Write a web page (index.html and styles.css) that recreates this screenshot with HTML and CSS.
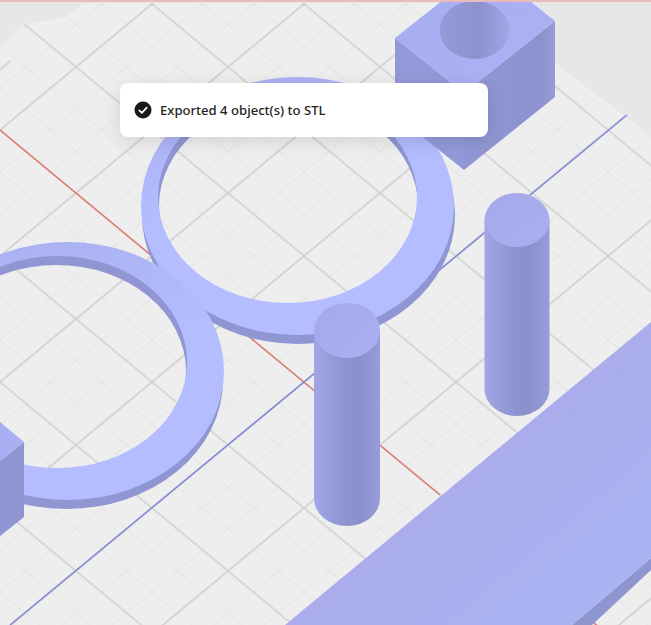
FILE: index.html
```html
<!DOCTYPE html>
<html lang="en">
<head>
<meta charset="utf-8">
<title>Export</title>
<link rel="stylesheet" href="styles.css">
</head>
<body>
<main class="viewport">
  <svg class="scene" viewBox="0 0 651 625" width="651" height="625" aria-hidden="true">
    <defs>
      <pattern id="grid" patternUnits="userSpaceOnUse" width="99" height="99" patternTransform="matrix(0.7677 -0.6364 0.7677 0.6364 304 382)">
        <path class="grid-minor" d="M33 0V99M66 0V99M0 33H99M0 66H99"/>
        <path class="grid-major" d="M0 0V99M99 0V99M0 0H99M0 99H99"/>
      </pattern>
      <linearGradient id="ringTop" x1="0" y1="0" x2="0.3" y2="1">
        <stop offset="0" stop-color="#a8aff0"/>
        <stop offset="0.55" stop-color="#b3bdff"/>
        <stop offset="1" stop-color="#b3bdff"/>
      </linearGradient>
      <linearGradient id="cylBody" x1="0" y1="0" x2="1" y2="0">
        <stop offset="0" stop-color="#a0a6e6"/>
        <stop offset="0.45" stop-color="#8e94d0"/>
        <stop offset="0.7" stop-color="#8a90ca"/>
        <stop offset="1" stop-color="#979dda"/>
      </linearGradient>
      <linearGradient id="cylTop" x1="0" y1="0" x2="1" y2="1">
        <stop offset="0" stop-color="#a6a8e8"/>
        <stop offset="1" stop-color="#a9b0f2"/>
      </linearGradient>
      <linearGradient id="boxTop" x1="0" y1="0" x2="1" y2="1">
        <stop offset="0" stop-color="#a6adef"/>
        <stop offset="1" stop-color="#aab2f6"/>
      </linearGradient>
      <linearGradient id="boxHole" x1="0" y1="0" x2="1" y2="0">
        <stop offset="0" stop-color="#969cd9"/>
        <stop offset="0.55" stop-color="#8b91cb"/>
        <stop offset="1" stop-color="#a0a7e6"/>
      </linearGradient>
      <linearGradient id="boxRight" x1="0" y1="0" x2="1" y2="0">
        <stop offset="0" stop-color="#9097d4"/>
        <stop offset="0.85" stop-color="#8b92cd"/>
        <stop offset="1" stop-color="#959cd9"/>
      </linearGradient>
      <linearGradient id="slabTop" x1="0" y1="0" x2="1" y2="1">
        <stop offset="0.3" stop-color="#aba8e8"/>
        <stop offset="1" stop-color="#a8b6f4"/>
      </linearGradient>
      <path id="ring" fill-rule="evenodd" d="M141 206a156.500 129 0 1 0 313 0a156.500 129 0 1 0-313 0ZM158 197a129.500 106 0 1 0 259 0a129.500 106 0 1 0-259 0Z"/>
    </defs>

    <rect class="backdrop" width="651" height="625"/>
    <path class="plate" d="M0 47L20 25L63 18L84 3H476L651 136V625H0Z"/>
    <path class="plate-grid" d="M0 47L20 25L63 18L84 3H476L651 136V625H0Z"/>
    <path class="stub" d="M0 70L10 61"/>
    <path class="axis-x" d="M0 130L440 495M590 620L600 628"/>
    <path class="axis-y" d="M627 115L10 625"/>

    <g class="ring-side">
      <use href="#ring" x="1" y="9"/>
      <use href="#ring" x="-231" y="174"/>
    </g>
    <g class="ring-top">
      <use href="#ring"/>
      <use href="#ring" x="-230" y="165"/>
    </g>

    <polygon class="box-left" points="395,38 464,93 464,170 395,115"/>
    <polygon class="box-right" points="464,93 555,21 555,97 464,170"/>
    <polygon class="box-top" points="395,38 486,-34 555,21 464,93"/>
    <ellipse class="box-hole" cx="474.500" cy="30" rx="35" ry="29"/>

    <polygon class="box-right-flat" points="0,461 24,442 24,517 0,536"/>
    <polygon class="box-top" points="0,422 24,442 0,461"/>

    <path class="cyl-body" d="M314 330V498.500A33 27.500 0 0 0 380 498.500V330Z"/>
    <ellipse class="cyl-top" cx="347" cy="330.500" rx="33" ry="27.500"/>
    <path class="cyl-body" d="M484.500 220V389A32.500 27 0 0 0 549.500 389V220Z"/>
    <ellipse class="cyl-top" cx="517" cy="220" rx="32.500" ry="27"/>

    <polygon class="slab-side" points="572,625 651,558 651,570 592,625"/>
    <polygon class="slab-top" points="285,625 651,322 651,558 572,625"/>

    <rect class="top-edge" width="651" height="2"/>
  </svg>

  <div class="toast" role="status">
    <svg class="toast-icon" viewBox="0 0 18 18" width="18" height="18" aria-hidden="true">
      <circle class="toast-icon-disc" cx="9" cy="9" r="8.500"/>
      <path class="toast-icon-check" d="M5.300 9.300L7.900 11.800L12.700 6.600"/>
    </svg>
    <span class="toast-text">Exported 4 object(s) to STL</span>
  </div>
</main>
</body>
</html>
```

FILE: styles.css
```css
html, body {
  margin: 0;
  padding: 0;
  background: #e6e6e6;
}

.viewport {
  position: relative;
  width: 651px;
  height: 625px;
  overflow: hidden;
}

.scene {
  display: block;
  filter: blur(0.4px);
}

.backdrop { fill: #e7e7e7; }
.plate { fill: #eeeeee; }
.plate-grid { fill: url(#grid); }
.grid-minor { fill: none; stroke: #e4e4e4; stroke-width: 1; }
.grid-major { fill: none; stroke: #cbcbcb; stroke-width: 1.3; }
.stub { fill: none; stroke: #d4d4d4; stroke-width: 2; }
.axis-x { fill: none; stroke: #e2766a; stroke-width: 1.4; }
.axis-y { fill: none; stroke: #7f88dc; stroke-width: 1.5; }

.ring-side { fill: #8f96d2; }
.ring-top { fill: url(#ringTop); }

.box-left { fill: #9299d8; }
.box-right { fill: url(#boxRight); }
.box-right-flat { fill: #8e95d0; }
.box-top { fill: url(#boxTop); }
.box-hole { fill: url(#boxHole); }

.cyl-body { fill: url(#cylBody); }
.cyl-top { fill: url(#cylTop); }

.slab-top { fill: url(#slabTop); }
.slab-side { fill: #8f96cf; }

.top-edge { fill: #e8bcbc; }

.toast {
  position: absolute;
  left: 120px;
  top: 83px;
  box-sizing: border-box;
  width: 368px;
  height: 54px;
  display: flex;
  align-items: center;
  gap: 8px;
  padding: 0 14px;
  background: #ffffff;
  border-radius: 8px;
  box-shadow: 0 4px 18px rgba(0, 0, 0, 0.12);
}

.toast-icon { flex: none; display: block; }
.toast-icon-disc { fill: #18181b; }
.toast-icon-check {
  fill: none;
  stroke: #ffffff;
  stroke-width: 1.7;
  stroke-linecap: round;
  stroke-linejoin: round;
}

.toast-text {
  font-family: "Noto Sans", "Open Sans", sans-serif;
  font-size: 13.1px;
  font-weight: 500;
  line-height: 18px;
  color: #242424;
}
```
